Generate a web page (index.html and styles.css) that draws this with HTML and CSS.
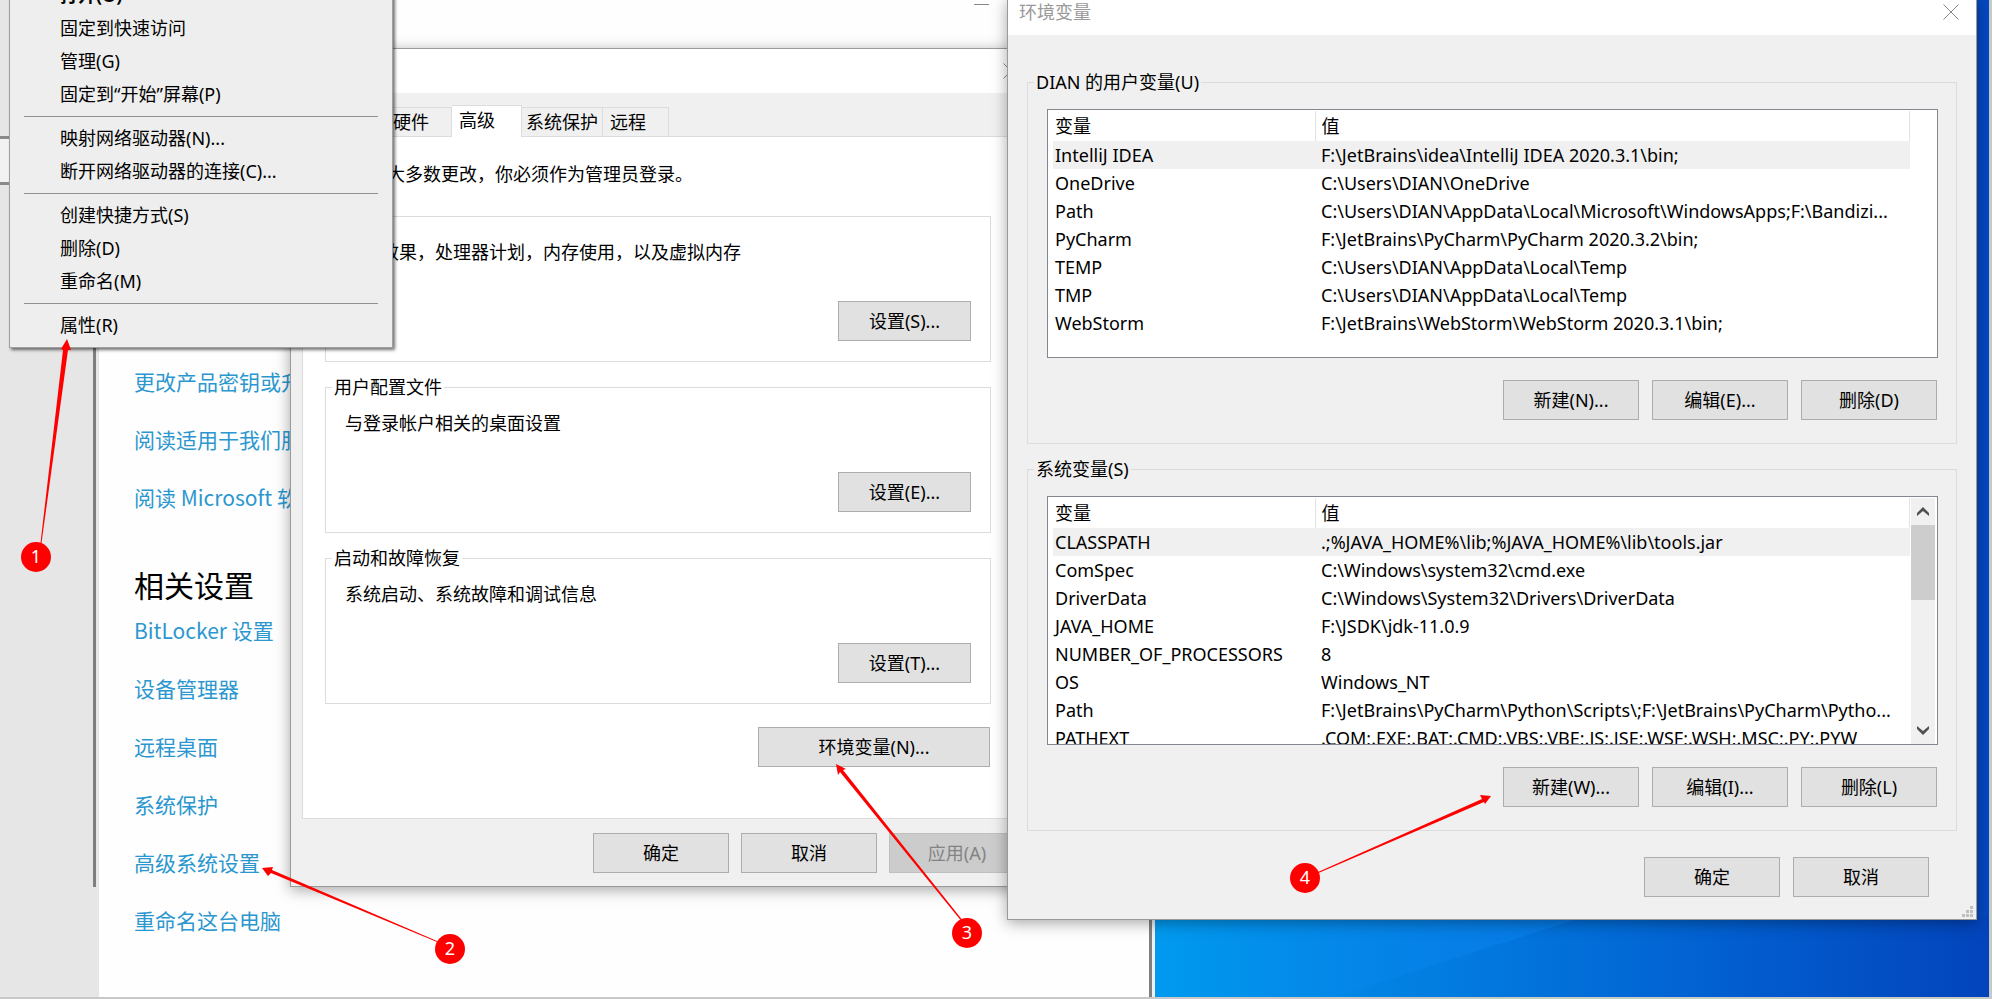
FILE: index.html
```html
<!DOCTYPE html>
<html lang="zh-CN">
<head>
<meta charset="utf-8">
<title>环境变量</title>
<link rel="stylesheet" href="styles.css">
</head>
<body>
<div class="desktop">
  <svg class="wallpaper" viewBox="0 0 837 80" preserveAspectRatio="none" aria-hidden="true">
    <defs>
      <linearGradient id="glow" x1="0" y1="0" x2="1" y2="0">
        <stop offset="0" stop-color="#009aef"/><stop offset="0.25" stop-color="#0284e4"/>
        <stop offset="0.5" stop-color="#026fd9"/><stop offset="0.75" stop-color="#0259cb"/>
        <stop offset="1" stop-color="#0344bb"/>
      </linearGradient>
      <linearGradient id="beam" x1="0" y1="0" x2="1" y2="0">
        <stop offset="0" stop-color="#0f8ff5" stop-opacity="0"/><stop offset="1" stop-color="#0a84f2" stop-opacity="0.5"/>
      </linearGradient>
    </defs>
    <rect width="837" height="80" fill="url(#glow)"/>
    <path d="M0 0H430L180 80H0Z" fill="url(#beam)"/>
  </svg>

  <section class="settings">
    <aside class="settings-side">
      <div class="side-search"></div>
      <div class="side-edge"></div>
    </aside>
    <div class="settings-main">
      <button class="minimize" aria-label="最小化"></button>
      <nav class="links">
        <a href="#">更改产品密钥或升</a>
        <a href="#">阅读适用于我们服</a>
        <a href="#">阅读 Microsoft 软</a>
      </nav>
      <h2>相关设置</h2>
      <nav class="links">
        <a href="#">BitLocker 设置</a>
        <a href="#">设备管理器</a>
        <a href="#">远程桌面</a>
        <a href="#">系统保护</a>
        <a href="#">高级系统设置</a>
        <a href="#">重命名这台电脑</a>
      </nav>
    </div>
  </section>

  <section class="window sysprops">
    <header class="titlebar">
      <span>系统属性</span>
      <button class="close" aria-label="关闭"><svg width="16" height="16" viewBox="0 0 16 16"><path d="M0.500 0.500L15.500 15.500M15.500 0.500L0.500 15.500" fill="none" stroke="#888"/></svg></button>
    </header>
    <div class="sys-body">
      <div class="tabs" role="tablist">
        <button class="tab tab-first" role="tab">计算机名</button>
        <button class="tab" role="tab">硬件</button>
        <button class="tab active" role="tab" aria-selected="true">高级</button>
        <button class="tab tab-wide" role="tab">系统保护</button>
        <button class="tab" role="tab">远程</button>
      </div>
      <div class="panel">
        <p class="note">要进行大多数更改，你必须作为管理员登录。</p>
        <fieldset class="group">
          <legend>性能</legend>
          <p>视觉效果，处理器计划，内存使用，以及虚拟内存</p>
          <div class="actions"><button class="btn">设置(S)...</button></div>
        </fieldset>
        <fieldset class="group">
          <legend>用户配置文件</legend>
          <p>与登录帐户相关的桌面设置</p>
          <div class="actions"><button class="btn">设置(E)...</button></div>
        </fieldset>
        <fieldset class="group">
          <legend>启动和故障恢复</legend>
          <p>系统启动、系统故障和调试信息</p>
          <div class="actions"><button class="btn">设置(T)...</button></div>
        </fieldset>
        <div class="actions env-action"><button class="btn btn-env">环境变量(N)...</button></div>
      </div>
      <footer class="actions sys-footer">
        <button class="btn">确定</button>
        <button class="btn">取消</button>
        <button class="btn" disabled>应用(A)</button>
      </footer>
    </div>
  </section>

  <section class="window envvars">
    <header class="titlebar">
      <span>环境变量</span>
      <button class="close" aria-label="关闭"><svg width="16" height="16" viewBox="0 0 16 16"><path d="M0.500 0.500L15.500 15.500M15.500 0.500L0.500 15.500" fill="none" stroke="#888"/></svg></button>
    </header>
    <div class="env-body">
      <fieldset class="group vars">
        <legend>DIAN 的用户变量(U)</legend>
        <div class="list">
          <table>
            <thead><tr><th class="name">变量</th><th>值</th></tr></thead>
            <tbody>
              <tr class="selected"><td>IntelliJ IDEA</td><td>F:\JetBrains\idea\IntelliJ IDEA 2020.3.1\bin;</td></tr>
              <tr><td>OneDrive</td><td>C:\Users\DIAN\OneDrive</td></tr>
              <tr><td>Path</td><td>C:\Users\DIAN\AppData\Local\Microsoft\WindowsApps;F:\Bandizi...</td></tr>
              <tr><td>PyCharm</td><td>F:\JetBrains\PyCharm\PyCharm 2020.3.2\bin;</td></tr>
              <tr><td>TEMP</td><td>C:\Users\DIAN\AppData\Local\Temp</td></tr>
              <tr><td>TMP</td><td>C:\Users\DIAN\AppData\Local\Temp</td></tr>
              <tr><td>WebStorm</td><td>F:\JetBrains\WebStorm\WebStorm 2020.3.1\bin;</td></tr>
            </tbody>
          </table>
          <div class="gutter"></div>
        </div>
        <div class="actions">
          <button class="btn">新建(N)...</button>
          <button class="btn">编辑(E)...</button>
          <button class="btn">删除(D)</button>
        </div>
      </fieldset>
      <fieldset class="group vars">
        <legend>系统变量(S)</legend>
        <div class="list">
          <table>
            <thead><tr><th class="name">变量</th><th>值</th></tr></thead>
            <tbody>
              <tr class="selected"><td>CLASSPATH</td><td>.;%JAVA_HOME%\lib;%JAVA_HOME%\lib\tools.jar</td></tr>
              <tr><td>ComSpec</td><td>C:\Windows\system32\cmd.exe</td></tr>
              <tr><td>DriverData</td><td>C:\Windows\System32\Drivers\DriverData</td></tr>
              <tr><td>JAVA_HOME</td><td>F:\JSDK\jdk-11.0.9</td></tr>
              <tr><td>NUMBER_OF_PROCESSORS</td><td>8</td></tr>
              <tr><td>OS</td><td>Windows_NT</td></tr>
              <tr><td>Path</td><td>F:\JetBrains\PyCharm\Python\Scripts\;F:\JetBrains\PyCharm\Pytho...</td></tr>
              <tr><td>PATHEXT</td><td>.COM;.EXE;.BAT;.CMD;.VBS;.VBE;.JS;.JSE;.WSF;.WSH;.MSC;.PY;.PYW</td></tr>
            </tbody>
          </table>
          <div class="gutter scrollbar">
            <button aria-label="向上"><svg width="12" height="9" viewBox="0 0 12 9"><path d="M0 6L6 0L12 6V9L6 4L0 9Z" fill="#505050"/></svg></button>
            <div class="thumb"></div>
            <button aria-label="向下"><svg width="12" height="9" viewBox="0 0 12 9"><path d="M0 3L6 9L12 3V0L6 5L0 0Z" fill="#505050"/></svg></button>
          </div>
        </div>
        <div class="actions">
          <button class="btn">新建(W)...</button>
          <button class="btn">编辑(I)...</button>
          <button class="btn">删除(L)</button>
        </div>
      </fieldset>
      <footer class="actions env-footer">
        <button class="btn">确定</button>
        <button class="btn">取消</button>
      </footer>
    </div>
    <svg class="grip" width="11" height="11" viewBox="0 0 11 11" aria-hidden="true"><path d="M8 0h3v3h-3zM4 4h3v3h-3zM8 4h3v3h-3zM0 8h3v3h-3zM4 8h3v3h-3zM8 8h3v3h-3z" fill="#bfbfbf"/></svg>
  </section>

  <ul class="menu" role="menu">
    <li><button role="menuitem"><b>打开(O)</b></button></li>
    <li><button role="menuitem">固定到快速访问</button></li>
    <li><button role="menuitem">管理(G)</button></li>
    <li><button role="menuitem">固定到“开始”屏幕(P)</button></li>
    <li class="separator" role="separator"></li>
    <li><button role="menuitem">映射网络驱动器(N)...</button></li>
    <li><button role="menuitem">断开网络驱动器的连接(C)...</button></li>
    <li class="separator" role="separator"></li>
    <li><button role="menuitem">创建快捷方式(S)</button></li>
    <li><button role="menuitem">删除(D)</button></li>
    <li><button role="menuitem">重命名(M)</button></li>
    <li class="separator" role="separator"></li>
    <li><button role="menuitem">属性(R)</button></li>
  </ul>

  <svg class="callouts" width="1992" height="999" viewBox="0 0 1992 999">
    <g fill="#f00">
      <path d="M40.500 543L63 350L61 349L67 339L71 350L68 350L41.500 543Z"/>
      <path d="M437 942L271 873L268 876L262 868L273 867L272 870L437 941Z"/>
      <path d="M960.500 920L840 772L838 775L836 764L846 769L843 770L961.500 919Z"/>
      <path d="M1318 872L1482 799L1480 795L1491 796L1485 804L1484 802L1318.500 873Z"/>
      <circle cx="36" cy="557" r="15"/>
      <circle cx="450" cy="949" r="15"/>
      <circle cx="967" cy="933" r="15"/>
      <circle cx="1305" cy="878" r="15"/>
    </g>
    <g class="callout-number">
      <text x="36" y="563">1</text>
      <text x="450" y="955">2</text>
      <text x="967" y="939">3</text>
      <text x="1305" y="884">4</text>
    </g>
  </svg>
</div>
</body>
</html>
```
FILE: styles.css
```css
*, *::after { box-sizing: border-box; }

body {
  margin: 0;
  font: 18px/24px "Noto Sans", "Noto Sans CJK SC", sans-serif;
  color: #000;
}

button {
  font: inherit;
  color: inherit;
  padding: 0;
  border: 0;
  background: none;
}

p, h2, fieldset, ul { margin: 0; padding: 0; }

.desktop {
  position: relative;
  height: 100vh;
  min-height: 960px;
  overflow: hidden;
  background: #0448c0;
  border-right: 3px solid #c8c8c8;
  border-bottom: 2px solid #c8c8c8;
}

.wallpaper {
  position: absolute;
  left: 1155px;
  right: 0;
  bottom: 0;
  width: calc(100% - 1155px);
  height: 80px;
}

/* Settings window */
.settings {
  position: absolute;
  inset: 0 auto 0 0;
  width: 1155px;
  display: flex;
  background: #fefefe;
}
.settings::after {
  content: "";
  width: 6px;
  border-left: 3px solid #7f7f7f;
  background: #f0f0f0;
}

.settings-side {
  position: relative;
  width: 99px;
  background: #e6e6e6;
}
.side-search {
  margin-top: 136px;
  height: 49px;
  border: solid #8a8a8a;
  border-width: 3px 0;
  background: #f2f2f2;
}
.side-edge {
  position: absolute;
  top: 0;
  right: 3px;
  width: 3px;
  height: 887px;
  background: #7f7f7f;
}

.settings-main {
  position: relative;
  flex: 1;
  padding: 367px 35px 0;
}
.minimize {
  position: absolute;
  top: 4px;
  left: 875px;
  width: 15px;
  height: 1px;
  background: #888;
}
.links {
  display: flex;
  flex-direction: column;
  align-items: flex-start;
  gap: 30px;
}
.links a {
  font-family: "Noto Sans CJK SC", sans-serif;
  font-size: 21px;
  line-height: 28px;
  color: #2c97cf;
  text-decoration: none;
}
.settings h2 {
  margin: 55px 0 10px;
  font-size: 30px;
  line-height: 40px;
  font-weight: 400;
}

/* Dialog windows */
.window {
  position: absolute;
  background: #f0f0f0;
  border: 1px solid #9a9a9a;
  box-shadow: 0 3px 14px rgba(0, 0, 0, 0.35);
}
.titlebar {
  display: flex;
  justify-content: space-between;
  align-items: center;
  padding-left: 11px;
  background: #fff;
  color: #999;
}
.close { display: flex; }

.group {
  min-width: 0;
  padding: 0 18px 20px 19px;
  border: 1px solid #dcdcdc;
}
.group legend {
  margin-left: -13px;
  padding: 0 2px;
}
.actions {
  display: flex;
  justify-content: flex-end;
  gap: 12px;
}
.btn {
  width: 136px;
  height: 40px;
  border: 1px solid #adadad;
  background: #e1e1e1;
}
.btn:disabled {
  color: #838383;
  background: #ccc;
  border-color: #bfbfbf;
}

/* System properties */
.sysprops {
  top: 48px;
  left: 290px;
  width: 745px;
}
.sysprops .titlebar {
  height: 44px;
  padding-right: 15px;
}
.sys-body { padding: 12px 9px 13px 11px; }
.tabs {
  display: flex;
  align-items: flex-end;
  height: 31px;
}
.tab {
  width: 66px;
  height: 29px;
  padding-left: 7px;
  text-align: left;
  border: 1px solid #dcdcdc;
  border-width: 1px 1px 0 0;
}
.tab-first { width: 84px; }
.tab-wide {
  width: 81px;
  padding-left: 4px;
}
.tab.active {
  position: relative;
  width: 70px;
  height: 32px;
  margin-bottom: -1px;
  padding-bottom: 4px;
  background: #fff;
}
.panel {
  margin-right: 2px;
  padding: 25px 31px 51px 22px;
  border: 1px solid #dcdcdc;
  background: #fff;
}
.panel .actions { padding-right: 1px; }
.note {
  padding-left: 8px;
  margin-bottom: 18px;
}
.sysprops .group + .group { margin-top: 13px; }
.sysprops .group p { margin: 12px 0 37px; }
.sysprops .group .btn { width: 133px; }
.env-action { margin-top: 23px; }
.btn-env { width: 232px; }
.sys-footer { margin-top: 14px; }

/* Environment variables */
.envvars {
  top: -1px;
  left: 1007px;
  right: 12px;
}
.envvars .titlebar {
  height: 35px;
  padding-right: 17px;
  padding-bottom: 11px;
}
.env-body { padding: 35px 19px 22px; }
.env-body .actions {
  gap: 13px;
  padding-right: 1px;
}
.vars { padding-bottom: 23px; }
.vars + .vars { margin-top: 13px; }
.list {
  display: flex;
  height: 249px;
  margin: 15px 0 22px;
  padding: 1px 2px 0 5px;
  overflow: hidden;
  border: 1px solid #828790;
  background: #fff;
}
.list table {
  flex: 1;
  align-self: flex-start;
  table-layout: fixed;
  border-collapse: collapse;
  white-space: nowrap;
}
.list th {
  height: 30px;
  padding: 0 0 0 6px;
  font-weight: 400;
  text-align: left;
  border-right: 1px solid #e2e2e2;
}
.list th.name {
  width: 262px;
  padding-left: 2px;
}
.list td {
  height: 28px;
  padding: 0 0 0 6px;
}
.list td:first-child { padding-left: 2px; }
.selected { background: #f0f0f0; }

.gutter {
  width: 24px;
  margin-left: 1px;
}
.scrollbar {
  display: flex;
  flex-direction: column;
  background: #f0f0f0;
}
.scrollbar button {
  display: flex;
  align-items: center;
  justify-content: center;
  height: 27px;
}
.thumb {
  height: 75px;
  margin-bottom: auto;
  background: #cdcdcd;
}
.env-body .env-footer {
  margin-top: 26px;
  padding-right: 28px;
}
.grip {
  position: absolute;
  right: 3px;
  bottom: 2px;
}

/* Context menu */
.menu {
  position: absolute;
  top: -24px;
  left: 9px;
  width: 384px;
  padding: 2px 0 5px;
  list-style: none;
  background: #eee;
  border: 1px solid #a0a0a0;
  box-shadow: 2px 2px 3px rgba(0, 0, 0, 0.55);
}
.menu button {
  display: block;
  width: 100%;
  height: 33px;
  padding: 0 0 2px 50px;
  text-align: left;
}
.separator {
  height: 11px;
  margin: 0 14px;
  border-bottom: 5px solid transparent;
  background: linear-gradient(#919191, #919191) 0 100% / 100% 1px no-repeat padding-box;
}

.callouts {
  position: absolute;
  top: 0;
  left: 0;
  pointer-events: none;
}
.callout-number {
  fill: #fff;
  font-size: 18px;
  text-anchor: middle;
}
```
